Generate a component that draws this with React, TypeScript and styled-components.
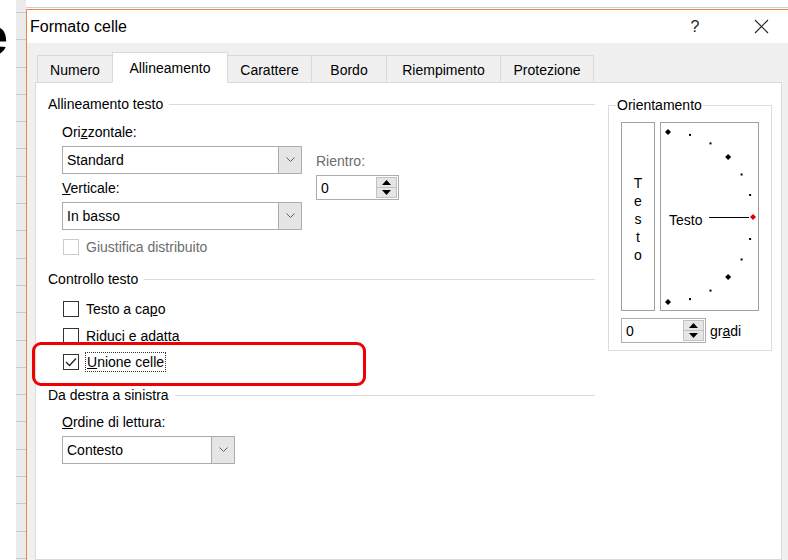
import styled, { createGlobalStyle } from 'styled-components'

const GlobalStyle = createGlobalStyle`
  html, body {
    margin: 0;
    padding: 0;
    background: #fff;
  }
  body {
    font-family: 'Liberation Sans', Arial, sans-serif;
    font-size: 14px;
    color: #000;
  }
  * {
    box-sizing: border-box;
  }
`

const TABS = [
  { label: 'Numero', width: 76 },
  { label: 'Allineamento', width: 116 },
  { label: 'Carattere', width: 85 },
  { label: 'Bordo', width: 76 },
  { label: 'Riempimento', width: 115 },
  { label: 'Protezione', width: 94 }
]

// dial ticks every 15 degrees, bigger marks every 45
const DIAL_CX = 7
const DIAL_CY = 94
const DIAL_R = 85
const DIAL_TICKS = Array.from({ length: 13 }, (_, i) => 90 - i * 15)

const Chevron = () => (
  <svg width="9" height="6" viewBox="0 0 9 6">
    <polyline points="0.5,0.5 4.5,4.5 8.5,0.5" fill="none" stroke="#606060" strokeWidth="1" />
  </svg>
)

const Arrow = ({ up }: { up?: boolean }) => (
  <svg width="9" height="5" viewBox="0 0 9 5">
    <polygon points={up ? '0,5 4.5,0 9,5' : '0,0 4.5,5 9,0'} fill="#000" />
  </svg>
)

const Combo = ({ value, width }: { value: string; width: number }) => (
  <ComboBox $width={width}>
    <ComboValue>{value}</ComboValue>
    <ComboButton>
      <Chevron />
    </ComboButton>
  </ComboBox>
)

const Spinner = ({ width }: { width: number }) => (
  <SpinBox $width={width}>
    <SpinValue>0</SpinValue>
    <SpinButtons>
      <SpinHalf>
        <Arrow up />
      </SpinHalf>
      <SpinHalf>
        <Arrow />
      </SpinHalf>
    </SpinButtons>
  </SpinBox>
)

const CheckBox = ({ checked, disabled }: { checked?: boolean; disabled?: boolean }) => (
  <Box $disabled={disabled}>
    {checked && (
      <svg width="12" height="10" viewBox="0 0 12 10">
        <polyline points="1,5 4.5,8.5 11,1.5" fill="none" stroke="#222" strokeWidth="1.3" />
      </svg>
    )}
  </Box>
)

const App = () => {
  return (
    <Screen>
      <GlobalStyle />
      <SheetEdge>
        <BigLetter>e</BigLetter>
      </SheetEdge>
      <RowHeaders />
      <Workspace>
        <SheetTop />
        <Dialog>
          <TitleBar>
            <Title>Formato celle</Title>
            <HelpButton>?</HelpButton>
            <CloseButton>
              <svg width="15" height="15" viewBox="0 0 15 15">
                <path d="M1 1 L14 14 M14 1 L1 14" stroke="#222" strokeWidth="1.1" />
              </svg>
            </CloseButton>
          </TitleBar>
          <DialogBody>
            <TabStrip>
              {TABS.map(tab => (
                <Tab key={tab.label} $width={tab.width} $active={tab.label === 'Allineamento'}>
                  {tab.label}
                </Tab>
              ))}
            </TabStrip>
            <Panel>
              <Columns>
                <MainColumn>
                  <SectionHeader>
                    <span>Allineamento testo</span>
                    <Rule />
                  </SectionHeader>
                  <Indent>
                    <FieldRow>
                      <div>
                        <FieldLabel>
                          Ori<u>z</u>zontale:
                        </FieldLabel>
                        <Combo value="Standard" width={240} />
                        <FieldLabel>
                          <u>V</u>erticale:
                        </FieldLabel>
                        <Combo value="In basso" width={240} />
                      </div>
                      <IndentField>
                        <FieldLabel $muted>Rientro:</FieldLabel>
                        <Spinner width={83} />
                      </IndentField>
                    </FieldRow>
                    <CheckRow $gap={7}>
                      <CheckBox disabled />
                      <CheckText $muted>Giustifica distribuito</CheckText>
                    </CheckRow>
                  </Indent>

                  <SectionHeader $gap={12}>
                    <span>Controllo testo</span>
                    <Rule />
                  </SectionHeader>
                  <Indent>
                    <CheckList>
                      <CheckRow>
                        <CheckBox />
                        <CheckText>
                          Testo a ca<u>p</u>o
                        </CheckText>
                      </CheckRow>
                      <CheckRow>
                        <CheckBox />
                        <CheckText>
                          Riduci e a<u>d</u>atta
                        </CheckText>
                      </CheckRow>
                      <CheckRow>
                        <CheckBox checked />
                        <FocusText>
                          <u>U</u>nione celle
                        </FocusText>
                        <Highlight />
                      </CheckRow>
                    </CheckList>
                  </Indent>

                  <SectionHeader $gap={13}>
                    <span>Da destra a sinistra</span>
                    <Rule />
                  </SectionHeader>
                  <Indent>
                    <FieldLabel $gap={7}>
                      <u>O</u>rdine di lettura:
                    </FieldLabel>
                    <Combo value="Contesto" width={173} />
                  </Indent>
                </MainColumn>

                <Orientation>
                  <Legend>Orientamento</Legend>
                  <DialRow>
                    <StackedBox>
                      {'Testo'.split('').map((ch, i) => (
                        <span key={i}>{ch}</span>
                      ))}
                    </StackedBox>
                    <DialBox>
                      <svg width="97" height="187" viewBox="0 0 97 187">
                        {DIAL_TICKS.map(deg => {
                          const rad = (deg * Math.PI) / 180
                          const x = DIAL_CX + DIAL_R * Math.cos(rad)
                          const y = DIAL_CY - DIAL_R * Math.sin(rad)
                          if (deg % 45 !== 0) {
                            return <rect key={deg} x={x - 1} y={y - 1} width="2" height="2" fill="#000" />
                          }
                          const s = 3
                          return (
                            <polygon
                              key={deg}
                              points={`${x},${y - s} ${x + s},${y} ${x},${y + s} ${x - s},${y}`}
                              fill={deg === 0 ? '#e00000' : '#000'}
                            />
                          )
                        })}
                        <line x1="48" y1="94.5" x2="88" y2="94.5" stroke="#000" strokeWidth="1" />
                        <text x="8" y="101.5" fontSize="14" fontFamily="'Liberation Sans', Arial, sans-serif">
                          Testo
                        </text>
                      </svg>
                    </DialBox>
                  </DialRow>
                  <DegreeRow>
                    <Spinner width={85} />
                    <DegreeText>
                      gr<u>a</u>di
                    </DegreeText>
                  </DegreeRow>
                </Orientation>
              </Columns>
            </Panel>
          </DialogBody>
        </Dialog>
      </Workspace>
    </Screen>
  )
}

export default App

const Screen = styled.div`
  width: 788px;
  height: 560px;
  overflow: hidden;
  display: flex;
  background: #fff;
`

const SheetEdge = styled.div`
  width: 16px;
  flex-shrink: 0;
  overflow: hidden;
`

const BigLetter = styled.span`
  display: block;
  margin: 10px 0 0 -21px;
  font: bold 52px/52px 'Liberation Sans', Arial, sans-serif;
  color: #000;
`

const RowHeaders = styled.div`
  width: 10px;
  flex-shrink: 0;
  background-color: #ebebeb;
  background-image: repeating-linear-gradient(
    to bottom,
    #c9c9c9 0 1px,
    transparent 1px 27.3px
  );
  background-position: 0 12px;
`

const Workspace = styled.div`
  flex: 1;
  display: flex;
  flex-direction: column;
`

const SheetTop = styled.div`
  height: 8px;
  flex-shrink: 0;
  border-bottom: 1px solid #cfcfcf;
  margin-bottom: 1px;
`

const Dialog = styled.div`
  flex: 1;
  display: flex;
  flex-direction: column;
  border-left: 1px solid #e8874c;
  border-top: 1px solid #e8874c;
`

const TitleBar = styled.div`
  height: 33px;
  flex-shrink: 0;
  display: flex;
  align-items: center;
  padding: 0 4px 0 3px;
  background: #fff;
`

const Title = styled.div`
  flex: 1;
  font-size: 16px;
`

const HelpButton = styled.div`
  width: 40px;
  text-align: center;
  font-size: 16px;
  color: #222;
`

const CloseButton = styled.div`
  width: 46px;
  margin-left: 23px;
  display: flex;
  justify-content: center;
`

const DialogBody = styled.div`
  flex: 1;
  display: flex;
  flex-direction: column;
  background: #f0f0f0;
  padding: 9px 6px 0 8px;
`

const TabStrip = styled.div`
  display: flex;
  align-items: flex-end;
  padding-left: 3px;
  margin-bottom: -1px;
  position: relative;
  z-index: 1;
`

const Tab = styled.div<{ $active?: boolean; $width: number }>`
  width: ${p => p.$width}px;
  height: ${p => (p.$active ? 31 : 28)}px;
  margin-left: -1px;
  display: flex;
  align-items: center;
  justify-content: center;
  padding-top: ${p => (p.$active ? 0 : 1)}px;
  background: ${p => (p.$active ? '#fff' : '#f0f0f0')};
  border: 1px solid #d9d9d9;
  border-bottom-color: ${p => (p.$active ? '#fff' : '#d9d9d9')};
  font-size: 14px;
  position: relative;
  z-index: ${p => (p.$active ? 1 : 0)};
`

const Panel = styled.div`
  flex: 1;
  background: #fff;
  border: 1px solid #d9d9d9;
  padding: 11px 0 0 12px;
`

const Columns = styled.div`
  display: flex;
  align-items: flex-start;
`

const MainColumn = styled.div`
  width: 547px;
`

const SectionHeader = styled.div<{ $gap?: number }>`
  display: flex;
  align-items: center;
  height: 20px;
  margin-top: ${p => p.$gap ?? 0}px;
  white-space: nowrap;
`

const Rule = styled.div`
  flex: 1;
  height: 1px;
  margin-left: 6px;
  background: #dcdcdc;
`

const Indent = styled.div`
  padding-left: 14px;
`

const FieldRow = styled.div`
  display: flex;
  align-items: flex-start;
`

const FieldLabel = styled.div<{ $muted?: boolean; $gap?: number }>`
  height: 20px;
  line-height: 20px;
  margin: ${p => p.$gap ?? 8}px 0 4px;
  color: ${p => (p.$muted ? '#6d6d6d' : '#000')};
  &:not(:first-child) {
    margin-top: 4px;
  }
`

const IndentField = styled.div`
  margin-left: 14px;
  padding-top: 29px;
`

const ComboBox = styled.div<{ $width: number }>`
  width: ${p => p.$width}px;
  height: 28px;
  display: flex;
  border: 1px solid #acacac;
  background: #fff;
`

const ComboValue = styled.div`
  flex: 1;
  padding-left: 4px;
  display: flex;
  align-items: center;
`

const ComboButton = styled.div`
  width: 23px;
  display: flex;
  align-items: center;
  justify-content: center;
  background: #e5e5e5;
  border-left: 1px solid #acacac;
`

const SpinBox = styled.div<{ $width: number }>`
  width: ${p => p.$width}px;
  height: 25px;
  display: flex;
  border: 1px solid #acacac;
  background: #fff;
`

const SpinValue = styled.div`
  flex: 1;
  padding-left: 4px;
  display: flex;
  align-items: center;
`

const SpinButtons = styled.div`
  width: 23px;
  display: flex;
  flex-direction: column;
  padding: 1px;
`

const SpinHalf = styled.div`
  flex: 1;
  display: flex;
  align-items: center;
  justify-content: center;
  background: #e6e6e6;
  border: 1px solid #c2c2c2;
  & + & {
    border-top: none;
  }
`

const CheckList = styled.div`
  display: flex;
  flex-direction: column;
  gap: 6.5px;
  margin-top: 10px;
`

const CheckRow = styled.div<{ $gap?: number }>`
  position: relative;
  display: flex;
  align-items: center;
  height: 20px;
  margin-top: ${p => p.$gap ?? 0}px;
  padding-left: 1px;
`

const Box = styled.div<{ $disabled?: boolean }>`
  width: 16px;
  height: 16px;
  flex-shrink: 0;
  display: flex;
  align-items: center;
  justify-content: center;
  border: 1px solid ${p => (p.$disabled ? '#cccccc' : '#333')};
  background: #fff;
`

const CheckText = styled.span<{ $muted?: boolean }>`
  margin-left: 7px;
  color: ${p => (p.$muted ? '#6d6d6d' : '#000')};
`

const FocusText = styled.span`
  margin-left: 6px;
  padding: 0 1px;
  line-height: 18px;
  border: 1px dotted #333;
`

const Highlight = styled.div`
  position: absolute;
  left: -30px;
  top: -10px;
  width: 334px;
  height: 44px;
  border: 3px solid #f00000;
  border-radius: 9px;
  pointer-events: none;
`

const Orientation = styled.fieldset`
  width: 164px;
  margin: 1px 0 0 13px;
  padding: 7px 11px 7px 12px;
  border: 1px solid #dcdcdc;
  min-width: 0;
`

const Legend = styled.legend`
  margin-left: -5px;
  padding: 0 1px;
  line-height: 20px;
`

const DialRow = styled.div`
  display: flex;
  gap: 5px;
`

const StackedBox = styled.div`
  width: 34px;
  height: 189px;
  border: 1px solid #a0a0a0;
  display: flex;
  flex-direction: column;
  align-items: center;
  justify-content: center;
  padding-top: 5px;
  line-height: 18px;
`

const DialBox = styled.div`
  width: 99px;
  height: 189px;
  border: 1px solid #a0a0a0;
  display: flex;
`

const DegreeRow = styled.div`
  display: flex;
  align-items: center;
  margin-top: 7px;
`

const DegreeText = styled.span`
  margin-left: 4px;
`
